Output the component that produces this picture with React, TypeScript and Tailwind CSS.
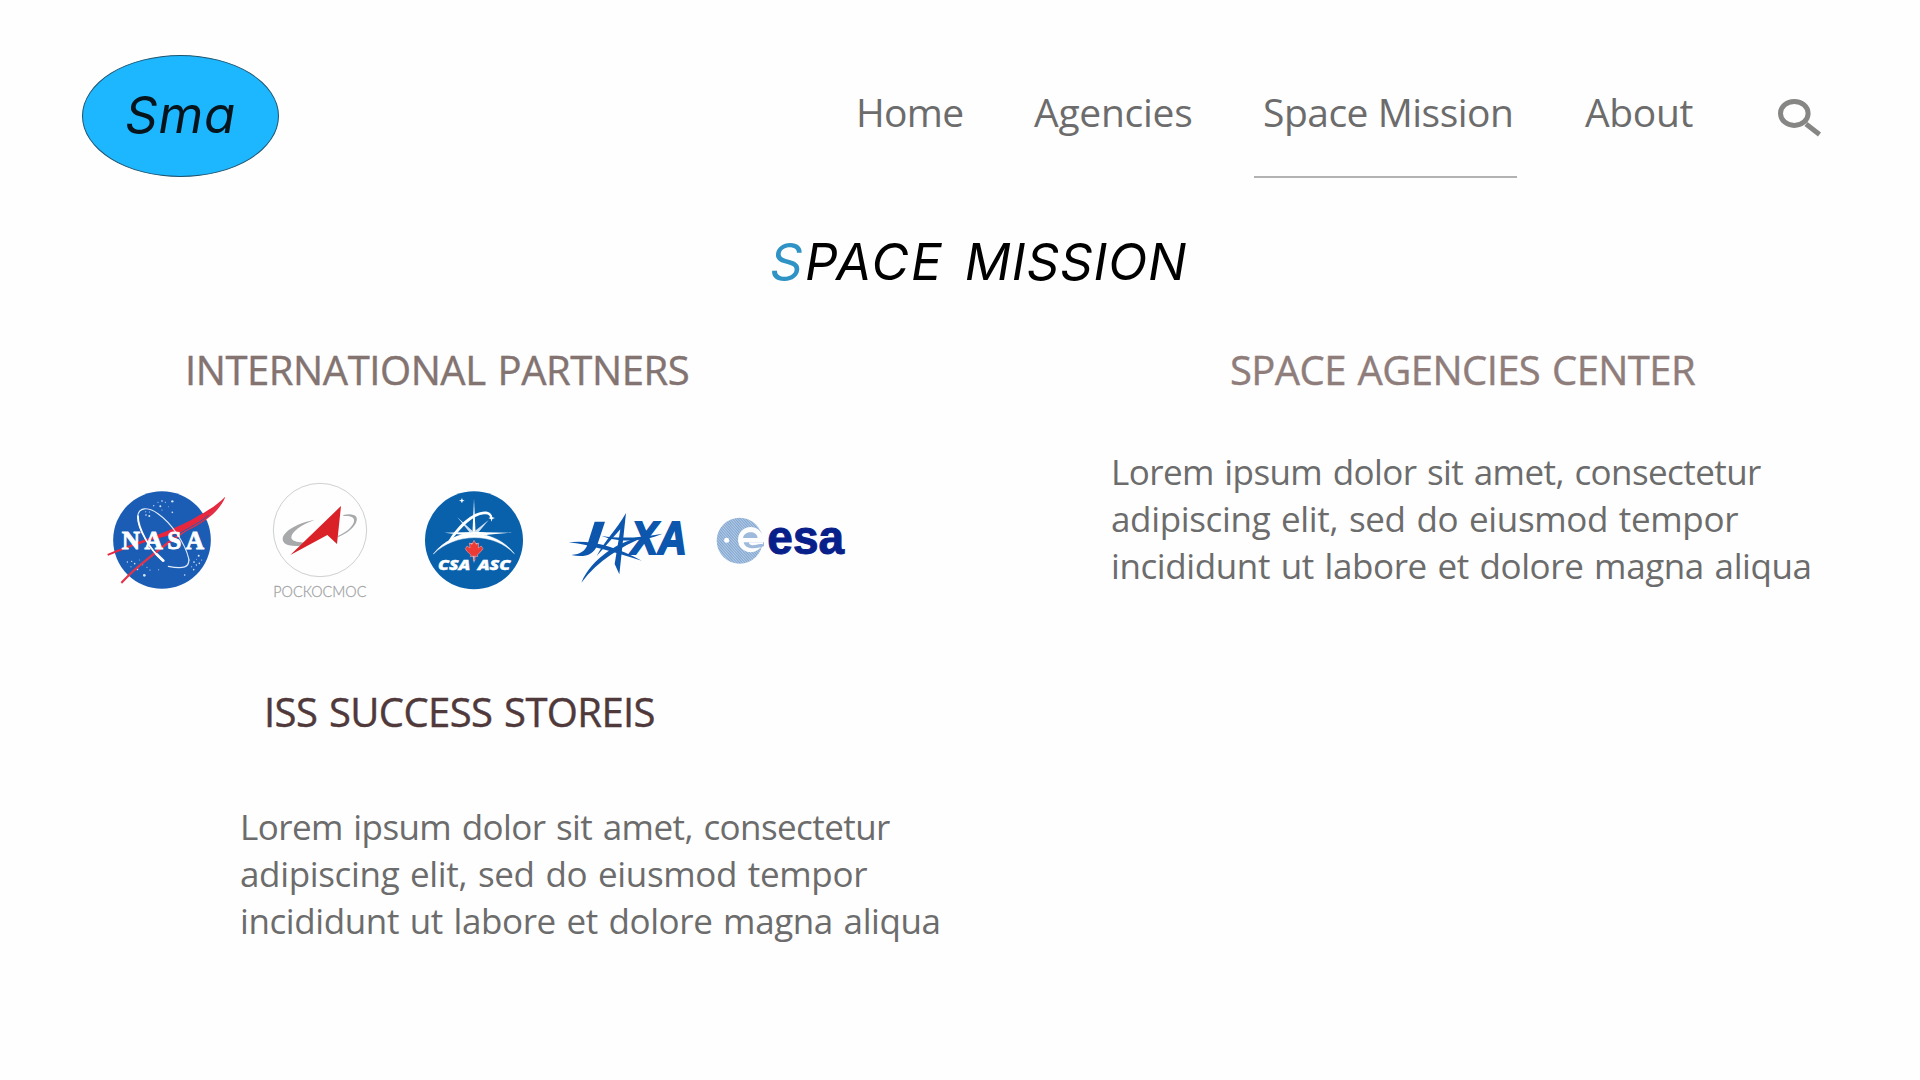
function NasaLogo() {
  const stars: [number, number, number][] = [
    [186, 93, 2.5], [217, 94, 3.5], [161, 107, 2], [181, 109, 3], [196, 97, 1.6], [174, 97, 1.6], [217, 127, 2.5], [138, 135, 2.5],
    [148, 138, 3], [137, 125, 1.6], [148, 126, 1.6], [186, 120, 1.5], [205, 110, 1.4], [82, 276, 2], [95, 274, 2], [104, 281, 2.4],
    [112, 298, 3], [93, 290, 1.6], [133, 316, 4], [141, 292, 1.6], [150, 300, 1.8], [176, 299, 1.6], [128, 284, 1.6],
    [296, 257, 3], [282, 276, 2.6], [289, 285, 2], [298, 280, 2.4], [275, 290, 1.6], [281, 299, 2.4], [254, 315, 2.4], [268, 270, 1.6],
    [305, 270, 1.6], [290, 268, 1.4], [118, 270, 1.4],
  ];
  return (
    <svg viewBox="0 0 420 390" className="h-[130px] w-[140px] shrink-0">
      <circle cx="186" cy="210" r="146.5" fill="#1b5db4" />
      {stars.map(([x, y, r], i) => (
        <circle key={i} cx={x} cy={y} r={r} fill="#d6e4f7" />
      ))}
      <path d="M22 252 C100 218 220 182 285 143 C330 119 356 100 376 80 C366 105 348 128 318 149 C280 178 240 189 200 198 C140 212 80 236 24 257Z" fill="#e8273e" />
      <path d="M376 80 C350 132 300 158 250 190 C180 240 110 295 66 341 L62 336 C110 285 170 240 225 198 C270 168 330 145 376 80Z" fill="#e2334a" />
      <path d="M326 136 C290 166 250 180 205 212" stroke="#1b5db4" strokeWidth="3" fill="none" />
      <path d="M188 271 C150 240 112 175 113 140 C115 110 145 110 175 132 C215 160 255 220 266 265 C270 292 250 298 205 289" fill="none" stroke="#dfeafa" strokeWidth="3.5" strokeLinecap="round" />
      <path d="M114 138 C114 176 150 240 188 271" fill="none" stroke="#fff" strokeWidth="5" strokeLinecap="round" />
      <path d="M170 253 L190 272" stroke="#fff" strokeWidth="8" strokeLinecap="round" />
      <text x="65" y="236" textLength="247" lengthAdjust="spacing" fontSize="76" fontWeight="700" fill="#fff" stroke="#fff" strokeWidth="2.5" className="font-['Liberation_Serif',serif]">
        NASA
      </text>
    </svg>
  );
}

function RoscosmosLogo() {
  return (
    <svg viewBox="0 0 360 420" className="h-[140px] w-[120px] shrink-0">
      <circle cx="180" cy="180" r="140" fill="#fefefe" stroke="#cfd0d1" strokeWidth="3" />
      <path d="M165 149 C112 159 70 183 68 207 C68 228 100 232 142 224 L158 215 C125 220 94 217 94 202 C94 186 124 163 165 149Z" fill="#a7a9ab" />
      <path d="M250 135 C283 128 297 140 288 158 C279 177 256 192 233 202 L233 198 C256 188 274 174 281 158 C286 143 276 136 250 138Z" fill="#a7a9ab" />
      <path d="M243 108 L91 255 L202 195 L231 222Z" fill="#da2128" />
      <text x="40" y="380" textLength="279" lengthAdjust="spacingAndGlyphs" fontSize="44" fontWeight="300" fill="#a0a2a4" stroke="#a0a2a4" strokeWidth="0.8" className="font-['Lato',sans-serif]">
        РОСКОСМОС
      </text>
    </svg>
  );
}

function CsaLogo() {
  return (
    <svg viewBox="0 0 390 360" className="h-[120px] w-[130px] shrink-0">
      <circle cx="192" cy="181" r="147" fill="#0960ab" />
      <path d="M70 222 C130 145 250 140 313 221 C250 155 135 158 70 222Z" fill="#fff" stroke="#fff" strokeWidth="1.5" />
      <path d="M192 56 L197 165 L187 165Z" fill="#fff" />
      <path d="M103 158 L190 156 L307 158 L190 168Z" fill="#fff" />
      <path d="M142 112 L198 162 L186 166Z M236 120 L198 166 L186 160Z M180 190 L204 190 L192 250Z" fill="#cfe0f0" />
      <path d="M112 190 C140 135 195 88 232 95 C243 98 247 105 246 116 L241 115 C240 104 232 101 222 103 C190 106 155 140 122 184Z" fill="#fff" />
      <path d="M118 183 C150 162 195 155 232 163" stroke="#fff" strokeWidth="7" fill="none" />
      <path d="M245 104 L247 112 L255 114 L247 117 L245 125 L242 117 L235 114 L242 112Z M156 54 L158 60 L164 62 L158 64 L156 70 L153 64 L147 62 L153 60Z" fill="#fff" />
      <path d="M192 181 L199 193 L206 189 L205 204 L214 198 L219 206 L214 213 L202 225 L203 230 L194 228 L195 241 L190 241 L191 228 L181 230 L183 225 L170 213 L166 206 L171 198 L180 204 L178 189 L186 193Z" fill="#ee3a35" stroke="#f9b9b6" strokeWidth="1.5" />
      <g fontSize="42" fontWeight="800" fontStyle="italic" fill="#fff" stroke="#fff" strokeWidth="1.2" className="font-['Open_Sans',sans-serif]">
        <text x="84" y="269" textLength="97" lengthAdjust="spacingAndGlyphs">
          CSA
        </text>
        <text x="203" y="269" textLength="98" lengthAdjust="spacingAndGlyphs">
          ASC
        </text>
      </g>
    </svg>
  );
}

function JaxaLogo() {
  return (
    <svg viewBox="0 0 420 285" className="h-[95px] w-[140px] shrink-0">
      <g fill="#0c56ad">
        <path d="M104 65 H135 L111 137 C100 164 74 174 34 165 C62 162 76 152 82 134Z" />
        <path d="M198 39 L178 223 L164 192 L181 88 L110 168 C134 122 168 92 198 39Z" />
        <path d="M124 107 C180 118 250 112 308 101 C250 126 170 128 124 107Z" />
        <path d="M26 127 C90 118 170 140 245 182 C170 160 100 136 26 127Z" />
        <path d="M64 248 C95 175 180 120 250 112 C185 140 115 180 64 248Z" />
        <text x="214" y="163" textLength="166" lengthAdjust="spacingAndGlyphs" fontSize="138" fontWeight="700" fontStyle="italic" stroke="#0c56ad" strokeWidth="6" className="font-['Liberation_Sans',sans-serif]">
          XA
        </text>
      </g>
    </svg>
  );
}

function EsaLogo() {
  return (
    <svg viewBox="0 0 480 240" className="h-[80px] w-[160px] shrink-0">
      <defs>
        <pattern id="esa-lines" width="6" height="6" patternUnits="userSpaceOnUse" patternTransform="rotate(48)">
          <rect width="6" height="6" fill="#b4cae4" />
          <rect width="6" height="3" fill="#7fa5d0" />
        </pattern>
      </defs>
      <circle cx="119" cy="122" r="69" fill="url(#esa-lines)" />
      <circle cx="152" cy="119" r="38" fill="#fdfdfe" />
      <path d="M129 114 C132 92 171 90 173 114Z M131 127 H192 V138 C176 146 135 152 131 127Z" fill="#9db9db" />
      <path d="M146 127 H190 L188 133 C176 130 166 137 156 136 C150 135 147 131 146 127Z" fill="#fdfdfe" />
      <circle cx="80" cy="121" r="7.5" fill="#fff" />
      <text x="202" y="161" textLength="230" lengthAdjust="spacingAndGlyphs" fill="#08208a" stroke="#08208a" strokeWidth="3" fontSize="142" fontWeight="700" className="font-['Liberation_Sans',sans-serif]">
        esa
      </text>
    </svg>
  );
}

function SearchIcon() {
  return (
    <svg viewBox="0 0 46 42" className="ml-[2px] mt-[3px] h-[42px] w-[46px] shrink-0" fill="none" stroke="#868684">
      <ellipse cx="18.3" cy="18.4" rx="13.8" ry="12" strokeWidth="5" />
      <path d="M30 29 L43.5 39.5" strokeWidth="5" />
    </svg>
  );
}

function Lorem() {
  return (
    <p className="whitespace-nowrap text-[35px] leading-[47px] text-[#6c6c6c] [word-spacing:2px]">
      <span className="block tracking-[-0.58px]">Lorem ipsum dolor sit amet, consectetur</span>
      <span className="block tracking-[-0.34px]">adipiscing elit, sed do eiusmod tempor</span>
      <span className="block tracking-[-0.4px]">incididunt ut labore et dolore magna aliqua</span>
    </p>
  );
}

export default function App() {
  return (
    <div className="h-[1080px] w-[1920px] overflow-hidden bg-[#fefefe] font-['Open_Sans','Noto_Sans',sans-serif]">
      <header className="flex h-[231px] items-start pl-[82px] pt-[55px]">
        <div className="flex h-[122px] w-[197px] items-center justify-center rounded-[50%] border border-[#1d5570] bg-[#1cb7ff]">
          <span className="-mt-[2px] font-['Inter',sans-serif] text-[51px] italic leading-[60px] tracking-[0.8px] text-[#06141c]">Sma</span>
        </div>
        <nav className="ml-[577px] flex whitespace-nowrap pt-[37px] text-[39px] leading-[40px] text-[#6c6c6c]">
          <a className="w-[178px] tracking-[-0.7px]">Home</a>
          <a className="w-[220px] tracking-[-0.27px]">Agencies</a>
          <a className="h-[86px] w-[263px] border-b-2 border-[#b2b2b2] pl-[9px] tracking-[-0.5px]">Space Mission</a>
          <a className="ml-[68px] w-[189px] tracking-[-0.33px]">About</a>
          <SearchIcon />
        </nav>
      </header>

      <h1 className="flex h-[60px] gap-[21px] pl-[770px] pt-px font-['Inter',sans-serif] text-[51px] italic leading-[60px] text-black">
        <span className="tracking-[2.2px]">
          <span className="text-[#2f93c5]">S</span>PACE
        </span>
        <span className="tracking-[0.9px]">MISSION</span>
      </h1>

      <main className="grid grid-cols-[1111px_1fr] whitespace-nowrap pt-[55px]">
        <section>
          <h2 className="pl-[185px] text-[40px] leading-[48px] tracking-[-0.43px] text-[#837371] [-webkit-text-stroke:0.4px_#837371] [word-spacing:2px]">INTERNATIONAL PARTNERS</h2>
          <div className="mt-[76px] flex h-[140px] items-start pl-[100px]">
            <NasaLogo />
            <div className="ml-[20px]">
              <RoscosmosLogo />
            </div>
            <div className="ml-[30px] mt-[10px]">
              <CsaLogo />
            </div>
            <div className="ml-[20px] mt-[30px]">
              <JaxaLogo />
            </div>
            <div className="mt-[30px]">
              <EsaLogo />
            </div>
          </div>
          <h2 className="mt-[78px] pl-[264px] text-[40px] leading-[48px] tracking-[-0.61px] text-[#4f393b] [-webkit-text-stroke:0.4px_#4f393b] [word-spacing:2px]">ISS SUCCESS STOREIS</h2>
          <div className="mt-[67px] pl-[240px]">
            <Lorem />
          </div>
        </section>
        <section>
          <h2 className="pl-[119px] text-[40px] leading-[48px] tracking-[-0.58px] text-[#8f7d7b] [-webkit-text-stroke:0.4px_#8f7d7b] [word-spacing:2px]">SPACE AGENCIES CENTER</h2>
          <div className="mt-[54px]">
            <Lorem />
          </div>
        </section>
      </main>
    </div>
  );
}
